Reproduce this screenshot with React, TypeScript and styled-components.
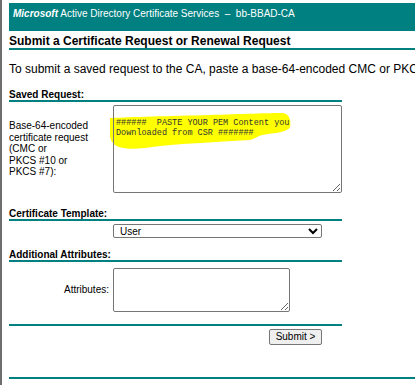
import styled, { createGlobalStyle } from "styled-components";

const GlobalStyle = createGlobalStyle`
  html, body {
    margin: 0;
    padding: 0;
    background: #ffffff;
  }
  body {
    font-family: "Liberation Sans", Arial, sans-serif;
    color: #000000;
  }
`;

const TEAL = "#008080";

const Page = styled.div`
  min-height: 100vh;
  box-sizing: border-box;
  border-left: 2px solid #6e6e6e;
  padding: 3px 0 0 7px;
  overflow: hidden;
`;

const Banner = styled.div`
  height: 28px;
  box-sizing: border-box;
  padding: 5px 0 0 4px;
  background: ${TEAL};
  color: #ffffff;
  font-size: 10px;
  line-height: 11.5px;
  white-space: nowrap;
`;

const Brand = styled.b`
  font-style: italic;
`;

const PageTitle = styled.h1`
  margin: 3px 0 0;
  font-size: 12px;
  line-height: 14px;
  font-weight: bold;
  border-bottom: 2px solid ${TEAL};
`;

const Intro = styled.p`
  margin: 12px 0 0;
  font-size: 12px;
  line-height: 14px;
  white-space: nowrap;
`;

const SectionHead = styled.div<{ $gap: number }>`
  width: 333px;
  margin-top: ${(p) => p.$gap}px;
  font-size: 10px;
  line-height: 11px;
  font-weight: bold;
  border-bottom: 2px solid ${TEAL};
`;

const FieldRow = styled.div<{ $gap: number }>`
  display: grid;
  grid-template-columns: 104px 209px;
  align-items: center;
  margin-top: ${(p) => p.$gap}px;
`;

const Label = styled.div<{ $right?: boolean }>`
  font-size: 10px;
  line-height: 11.5px;
  text-align: ${(p) => (p.$right ? "right" : "left")};
  padding-right: ${(p) => (p.$right ? "4px" : "0")};
`;

const AreaWrap = styled.div<{ $w: number; $h: number }>`
  position: relative;
  width: ${(p) => p.$w}px;
  height: ${(p) => p.$h}px;
  background: #ffffff;
`;

const Highlight = styled.svg`
  position: absolute;
  left: -3px;
  top: 0;
  z-index: 0;
  pointer-events: none;
`;

const TextArea = styled.textarea`
  position: relative;
  z-index: 1;
  display: block;
  width: 100%;
  height: 100%;
  box-sizing: border-box;
  margin: 0;
  padding: 2px;
  border: 1px solid #767676;
  border-radius: 2px;
  background: transparent;
  font-family: "Liberation Mono", "Courier New", monospace;
  font-size: 8.5px;
  line-height: 10px;
  color: #333333;
  resize: both;
`;

const Select = styled.select`
  display: block;
  width: 209px;
  height: 14px;
  box-sizing: border-box;
  margin: 0;
  padding: 0 0 0 2px;
  border: 1px solid #767676;
  border-radius: 2px;
  background: #ffffff;
  font-family: "Liberation Sans", Arial, sans-serif;
  font-size: 10px;
  color: #000000;
`;

const Divider = styled.div<{ $full?: boolean; $gap: number }>`
  width: ${(p) => (p.$full ? "auto" : "333px")};
  height: 2px;
  margin-top: ${(p) => p.$gap}px;
  background: ${TEAL};
`;

const Actions = styled.div`
  display: flex;
  justify-content: flex-end;
  width: 313px;
  margin-top: 3px;
`;

const Button = styled.button`
  width: 53px;
  height: 16px;
  box-sizing: border-box;
  margin: 0;
  padding: 0;
  border: 1px solid #767676;
  border-radius: 2px;
  background: #efefef;
  font-family: "Liberation Sans", Arial, sans-serif;
  font-size: 10px;
  line-height: 14px;
  color: #000000;
`;

export default function App() {
  return (
    <Page>
      <GlobalStyle />
      <Banner>
        <Brand>Microsoft</Brand> Active Directory Certificate Services &nbsp;–&nbsp; bb-BBAD-CA
      </Banner>
      <PageTitle>Submit a Certificate Request or Renewal Request</PageTitle>
      <Intro>
        To submit a saved request to the CA, paste a base-64-encoded CMC or PKCS #10 certificate request
      </Intro>

      <SectionHead $gap={13}>Saved Request:</SectionHead>
      <FieldRow $gap={3}>
        <Label>
          Base-64-encoded
          <br />
          certificate request
          <br />
          (CMC or
          <br />
          PKCS #10 or
          <br />
          PKCS #7):
        </Label>
        <AreaWrap $w={229} $h={88}>
          <Highlight width="184" height="50" viewBox="0 0 184 50">
            <path
              d="M0 13 C20 12 60 11 100 10 C130 9 160 8 173 8 C180 9 181 16 180 22 C178 27 165 28 152 30 C146 32 144 34 140 35 C110 37 80 38 50 41 C35 43 22 45 14 43 C4 42 0 36 0 30 Z"
              fill="#ffff00"
            />
          </Highlight>
          <TextArea
            spellCheck={false}
            defaultValue={"\n######  PASTE YOUR PEM Content you\nDownloaded from CSR #######"}
          />
        </AreaWrap>
      </FieldRow>

      <SectionHead $gap={15}>Certificate Template:</SectionHead>
      <FieldRow $gap={3}>
        <Label />
        <Select defaultValue="User">
          <option value="User">User</option>
        </Select>
      </FieldRow>

      <SectionHead $gap={11}>Additional Attributes:</SectionHead>
      <FieldRow $gap={6}>
        <Label $right>Attributes:</Label>
        <AreaWrap $w={177} $h={44}>
          <TextArea spellCheck={false} />
        </AreaWrap>
      </FieldRow>

      <Divider $gap={12} />
      <Actions>
        <Button type="button">Submit &gt;</Button>
      </Actions>
      <Divider $full $gap={32} />
    </Page>
  );
}
